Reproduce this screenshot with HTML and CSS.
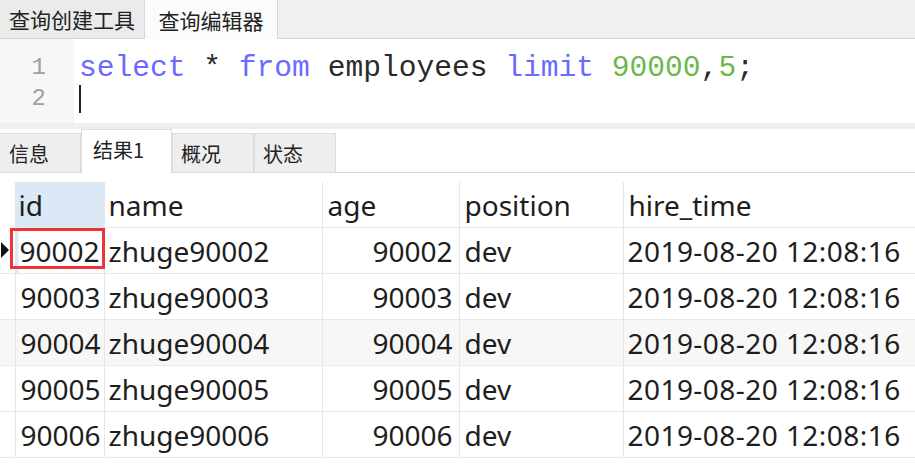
FILE: index.html
```html
<!DOCTYPE html>
<html lang="zh">
<head>
<meta charset="utf-8">
<title>查询编辑器</title>
<link rel="stylesheet" href="styles.css">
</head>
<body>
<div class="top-tabs">
  <div class="ttab">查询创建工具</div>
  <div class="ttab active">查询编辑器</div>
  <div class="ttab-rest"></div>
</div>
<div class="editor">
  <div class="gutter">
    <div class="ln">1</div>
    <div class="ln">2</div>
  </div>
  <div class="code">
    <div class="cl"><span class="kw">select</span> * <span class="kw">from</span> employees <span class="kw">limit</span> <span class="num">90000</span>,<span class="num">5</span>;</div>
    <div class="cl"><span class="caret"></span></div>
  </div>
</div>
<div class="band"></div>
<div class="rtabs">
  <div class="rtab">信息</div>
  <div class="rtab active">结果1</div>
  <div class="rtab">概况</div>
  <div class="rtab">状态</div>
</div>
<table class="grid">
  <colgroup>
    <col class="c-ind"><col class="c-id"><col class="c-name"><col class="c-age"><col class="c-pos"><col class="c-hire">
  </colgroup>
  <thead>
    <tr><th class="ind"></th><th class="hsel">id</th><th class="tight">name</th><th>age</th><th>position</th><th>hire_time</th></tr>
  </thead>
  <tbody>
    <tr><td class="ind"><span class="ptr"></span></td><td class="cur">90002<span class="mark"></span></td><td class="tight">zhuge90002</td><td class="r">90002</td><td>dev</td><td class="dt">2019-08-20 12:08:16</td></tr>
    <tr><td class="ind"></td><td>90003</td><td class="tight">zhuge90003</td><td class="r">90003</td><td>dev</td><td class="dt">2019-08-20 12:08:16</td></tr>
    <tr class="alt"><td class="ind"></td><td>90004</td><td class="tight">zhuge90004</td><td class="r">90004</td><td>dev</td><td class="dt">2019-08-20 12:08:16</td></tr>
    <tr><td class="ind"></td><td>90005</td><td class="tight">zhuge90005</td><td class="r">90005</td><td>dev</td><td class="dt">2019-08-20 12:08:16</td></tr>
    <tr><td class="ind"></td><td>90006</td><td class="tight">zhuge90006</td><td class="r">90006</td><td>dev</td><td class="dt">2019-08-20 12:08:16</td></tr>
  </tbody>
</table>
</body>
</html>
```
FILE: styles.css
```css
html, body {
  margin: 0;
  padding: 0;
  background: #ffffff;
  width: 915px;
  height: 465px;
  overflow: hidden;
  font-family: "Noto Sans", "Noto Sans CJK SC", sans-serif;
  color: #1e1e1e;
}

.top-tabs {
  display: flex;
  height: 39px;
  background: #f0f0f0;
}
.ttab {
  width: 145px;
  box-sizing: border-box;
  background: #ebebeb;
  border-right: 1px solid #d6d6d6;
  border-bottom: 1px solid #d6d6d6;
  display: flex;
  align-items: center;
  justify-content: center;
  font-family: "Noto Sans CJK SC", sans-serif;
  font-size: 21px;
  color: #222222;
}
.ttab.active {
  width: 133px;
  background: #fbfbfb;
  border-bottom: none;
  border-right: 1px solid #d6d6d6;
}
.ttab-rest {
  flex: 1;
  background: #f0f0f0;
  border-bottom: 1px solid #d6d6d6;
}

.editor {
  display: flex;
  height: 84px;
  background: #ffffff;
}
.gutter {
  width: 74px;
  background: #f7f7f7;
  padding-top: 13px;
  box-sizing: border-box;
}
.ln {
  height: 31px;
  line-height: 31px;
  text-align: right;
  padding-right: 28px;
  font-family: "Liberation Mono", monospace;
  font-size: 24px;
  color: #a0a0a0;
}
.code {
  flex: 1;
  padding-top: 14px;
  padding-left: 5px;
}
.cl {
  height: 31px;
  line-height: 31px;
  font-family: "Liberation Mono", monospace;
  font-size: 29.6px;
  color: #2a2a2a;
  white-space: pre;
}
.kw { color: #6a6aff; }
.num { color: #6cb84e; }
.caret {
  display: inline-block;
  width: 2px;
  height: 28px;
  background: #222;
  vertical-align: middle;
}

.band {
  height: 6px;
  background: #efefef;
}

.rtabs {
  display: flex;
  align-items: flex-end;
  height: 43px;
  border-bottom: 1px solid #dadada;
}
.rtab {
  width: 82px;
  height: 39px;
  box-sizing: border-box;
  background: #eeeeee;
  border: 1px solid #dcdcdc;
  border-bottom: none;
  display: flex;
  align-items: center;
  padding-left: 8px;
  font-family: "Noto Sans CJK SC", sans-serif;
  font-size: 20px;
  color: #222222;
}
.rtab:first-child {
  width: 81px;
  border-left: none;
  padding-left: 9px;
}
.rtab.active {
  width: 91px;
  height: 44px;
  background: #ffffff;
  margin-bottom: -1px;
  padding-left: 11px;
  padding-bottom: 4px;
}

.grid {
  margin-top: 9px;
  border-collapse: collapse;
  table-layout: fixed;
  width: 915px;
  font-size: 28px;
}
.c-ind { width: 15px; }
.c-id { width: 89px; }
.c-name { width: 218px; }
.c-age { width: 137px; }
.c-pos { width: 164px; }
.c-hire { width: 292px; }

.grid th {
  height: 45px;
  padding: 0 0 0 5px;
  text-align: left;
  font-weight: normal;
  border-left: 1px solid #e6e6e6;
  border-bottom: 1px solid #e6e6e6;
  white-space: nowrap;
  overflow: hidden;
}
.grid th.ind, .grid td.ind {
  border-left: none;
  padding: 0;
}
.grid th.ind {
  border-bottom: none;
}
.grid th.hsel {
  background: #dbe9f7;
  padding-left: 3px;
}
.grid td {
  height: 45px;
  padding: 0 0 0 5px;
  border-left: 1px solid #e6e6e6;
  border-bottom: 1px solid #e9e9e9;
  white-space: nowrap;
  overflow: hidden;
}
.grid .tight {
  padding-left: 4px;
}
.grid td.dt {
  letter-spacing: 0.45px;
  padding-left: 4px;
}
.grid tr.alt td {
  background: #f7f7f7;
}
.grid td.r {
  text-align: right;
  padding: 0 6px 0 0;
}
.grid td.ind {
  position: relative;
}
.ptr {
  display: block;
  width: 0;
  height: 0;
  margin-left: 1px;
  border-top: 8px solid transparent;
  border-bottom: 8px solid transparent;
  border-left: 8px solid #111;
}
.grid td.cur {
  position: relative;
  overflow: visible;
  padding-left: 4px;
  background: linear-gradient(to right, #dbe9f7 3px, #ffffff 3px);
}
.mark {
  position: absolute;
  left: -6px;
  top: 0;
  width: 95px;
  height: 41px;
  box-sizing: border-box;
  border: 3px solid #ee3535;
}
```
